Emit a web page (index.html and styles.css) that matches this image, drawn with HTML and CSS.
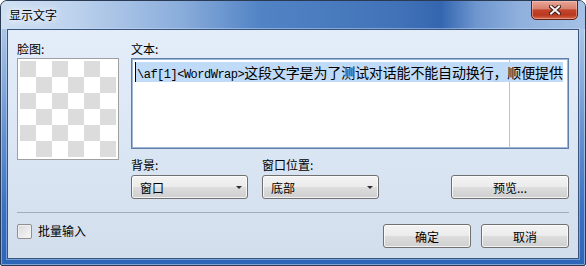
FILE: index.html
```html
<!DOCTYPE html>
<html lang="zh-CN">
<head>
<meta charset="utf-8">
<title>显示文字</title>
<link rel="stylesheet" href="styles.css">
</head>
<body>
<div class="window">
  <div class="titlebar">
    <span class="title">显示文字</span>
    <div class="close">
      <svg width="12" height="10" viewBox="0 0 12 10">
        <path d="M2 1.5 L10 8.5 M10 1.5 L2 8.5" stroke="#3b1a14" stroke-width="4" stroke-linecap="square" fill="none"/>
        <path d="M2 1.5 L10 8.5 M10 1.5 L2 8.5" stroke="#f4f4f4" stroke-width="2" stroke-linecap="square" fill="none"/>
      </svg>
    </div>
  </div>
  <div class="client">
    <div class="main">
      <div class="face-col">
        <div class="label">脸图:</div>
        <div class="face"><div class="checker"></div></div>
      </div>
      <div class="text-col">
        <div class="label">文本:</div>
        <div class="editor">
          <div class="margin-line"></div>
          <div class="line"><span class="sel"><span class="mono">\af[1]&lt;WordWrap&gt;</span><span class="cjk">这段文字是为了测试对话能不能自动换行，顺便提供</span></span></div>
        </div>
        <div class="options">
          <div class="field">
            <div class="label">背景:</div>
            <div class="combo"><span>窗口</span><i class="arrow"></i></div>
          </div>
          <div class="field">
            <div class="label">窗口位置:</div>
            <div class="combo"><span>底部</span><i class="arrow"></i></div>
          </div>
          <button class="btn preview">预览...</button>
        </div>
      </div>
    </div>
    <div class="sep"></div>
    <div class="footer">
      <label class="check"><span class="box"></span>批量输入</label>
      <div class="actions">
        <button class="btn">确定</button>
        <button class="btn">取消</button>
      </div>
    </div>
  </div>
</div>
</body>
</html>
```

FILE: styles.css
```css
* { box-sizing: border-box; }
html, body { margin: 0; padding: 0; background: #ffffff; }
body {
  font-family: "Noto Sans CJK SC", "Noto Sans", sans-serif;
  font-size: 12px;
  color: #000;
}
.window {
  width: 586px;
  height: 266px;
  border: 1px solid #2a3a52;
  border-radius: 7px 7px 2px 2px;
  background: linear-gradient(180deg, #bcd2ec 0, #a3c0e4 40px, #6792d0 130px, #3a70c2 210px, #2c64b8 266px);
  padding: 0 6px 6px;
  display: flex;
  flex-direction: column;
  box-shadow: inset 0 0 0 1px rgba(255,255,255,.4);
  overflow: hidden;
}
.titlebar {
  margin: 0 -6px;
  height: 28px;
  flex: none;
  padding: 0 7px 0 8px;
  display: flex;
  justify-content: space-between;
  align-items: flex-start;
  border-radius: 6px 6px 0 0;
  background: linear-gradient(90deg, #cfe0f3 0px, #bed3ee 70px, #8aaddb 180px, #5183c5 260px, #4172b8 400px, #3466b0 440px, #6e96cf 475px, #90b1dd 520px, #a6c1e5 586px);
}
.title {
  line-height: 28px;
  text-shadow: 0 0 6px #fff, 0 0 10px rgba(255,255,255,.9);
}
.close {
  width: 47px;
  height: 20px;
  margin-top: -1px;
  border: 1px solid #5a2219;
  border-radius: 0 0 5px 5px;
  background: linear-gradient(180deg, #e9a697 0%, #d98270 42%, #c3432c 50%, #b8391f 78%, #d7674c 100%);
  box-shadow: inset 0 0 0 1px rgba(255,210,200,.45);
  display: flex;
  align-items: center;
  justify-content: center;
}
.client {
  flex: 1;
  border: 1px solid #3a5579;
  background: linear-gradient(180deg, #e3edfa 0%, #dbe6f5 50%, #d3deec 100%);
  padding: 11px 9px 10px;
  display: flex;
  flex-direction: column;
  box-shadow: 0 0 0 1px rgba(200,225,255,.45);
}
.main { display: flex; gap: 12px; }
.face-col { width: 102px; }
.label {
  height: 16px;
  line-height: 16px;
  margin-bottom: 1px;
  white-space: nowrap;
}
.face {
  width: 102px;
  height: 102px;
  border: 1px solid #a0a0a0;
  background: #fff;
  padding: 2px;
}
.checker {
  width: 96px;
  height: 96px;
  background: repeating-conic-gradient(#ffffff 0 25%, #dcdcdc 0 50%) 0 0 / 32px 32px;
}
.text-col { width: 438px; display: flex; flex-direction: column; }
.editor {
  position: relative;
  height: 91px;
  border: 1px solid #5f7ea9;
  box-shadow: inset 0 0 0 1px #9fb6d4;
  background: #fff;
  padding: 3px 2px 2px 3px;
  overflow: hidden;
}
.margin-line {
  position: absolute;
  left: 377px;
  top: 1px;
  bottom: 1px;
  width: 1px;
  background: #c2c2c2;
  z-index: 0;
}
.line {
  position: relative;
  z-index: 1;
  height: 20px;
  line-height: 20px;
  white-space: nowrap;
  font-size: 14px;
}
.sel {
  display: inline-block;
  height: 20px;
  background: #bfdbf8;
  border-left: 1px solid #000;
  padding-left: 1px;
}
.mono {
  font-family: "Liberation Mono", "DejaVu Sans Mono", monospace;
  font-size: 12px;
  letter-spacing: -0.5px;
}
.cjk { letter-spacing: -0.15px; }
.options {
  display: flex;
  align-items: flex-end;
  margin-top: 8px;
}
.field { width: 117px; display: flex; flex-direction: column; }
.field + .field { margin-left: 14px; }
.field .label { margin-bottom: 2px; }
.combo, .btn {
  height: 24px;
  border: 1px solid #707070;
  border-radius: 3px;
  background: linear-gradient(180deg, #f3f3f3 0%, #ebebeb 50%, #dddddd 50%, #cfcfcf 100%);
  box-shadow: inset 0 0 0 1px rgba(255,255,255,.75);
  font: inherit;
  color: #000;
  padding: 0;
}
.combo {
  display: flex;
  align-items: center;
  justify-content: space-between;
  padding: 0 5px 0 8px;
}
.arrow {
  width: 0;
  height: 0;
  border-left: 3px solid transparent;
  border-right: 3px solid transparent;
  border-top: 3px solid #2e2e2e;
}
.preview { margin-left: auto; width: 118px; }
.sep {
  margin-top: 13px;
  height: 1px;
  background: #a4acb6;
  flex: none;
}
.footer {
  display: flex;
  justify-content: space-between;
  align-items: flex-start;
  margin-top: 11px;
}
.check {
  display: flex;
  align-items: center;
  gap: 6px;
  margin-top: -1px;
  line-height: 16px;
}
.box {
  width: 15px;
  height: 15px;
  border: 1px solid #8e8f8f;
  border-radius: 2px;
  background: linear-gradient(135deg, #dadada, #f7f7f7);
  box-shadow: inset 0 0 0 1px #f2f2f2;
}
.actions { display: flex; gap: 10px; }
.actions .btn { width: 88px; }
```
